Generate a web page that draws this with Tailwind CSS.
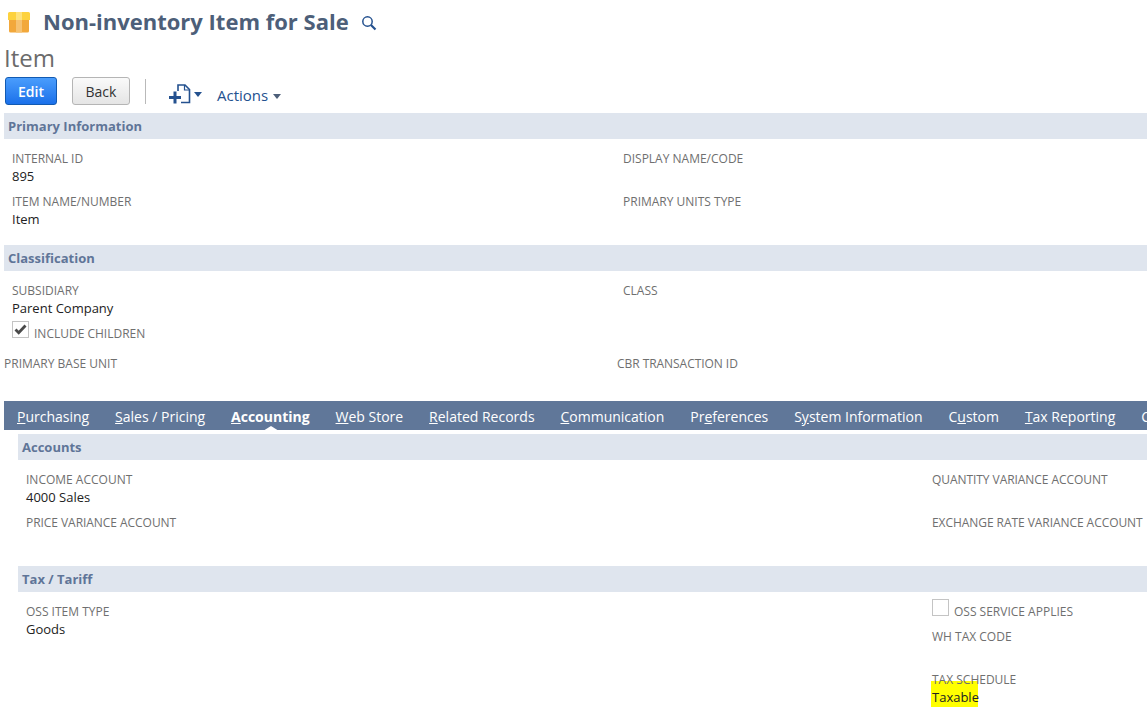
<!DOCTYPE html>
<html lang="en">
<head>
<meta charset="UTF-8">
<title>Non-inventory Item for Sale</title>
<script src="https://cdn.jsdelivr.net/npm/@tailwindcss/browser@4"></script>
</head>
<body class="bg-white overflow-hidden font-['Open_Sans',sans-serif] w-[1147px] h-[714px]">
  <!-- Title -->
  <div class="h-[43px] flex items-center pl-[8px]">
    <svg width="22" height="21" viewBox="0 0 22 21" class="mt-[1px]">
      <path d="M1 6h20v13a1.500 1.500 0 0 1-1.500 1.500h-17A1.500 1.500 0 0 1 1 19z" fill="#f2a83b"/>
      <path d="M0 1.500A1.500 1.500 0 0 1 1.500 0h19A1.500 1.500 0 0 1 22 1.500V8H0z" fill="#fdd23e"/>
      <rect x="8" y="8" width="6" height="12.500" fill="#f6c271"/>
      <rect x="8" y="0" width="6" height="8" fill="#fee27d"/>
    </svg>
    <h1 class="ml-[13px] mt-[-2px] text-[22px] leading-[30px] font-bold text-[#4d5f79]">Non-inventory Item for Sale</h1>
    <svg width="16" height="16" viewBox="0 0 16 16" class="ml-[12px] mt-[3px]" fill="none" stroke="#24518f">
      <circle cx="6.500" cy="6.500" r="4.700" stroke-width="1.500"/>
      <path d="M10 10l4.500 4.500" stroke-width="2.200"/>
    </svg>
  </div>
  <div class="h-[29px] pl-[4px] text-[24px] leading-[29px] text-[#6b6b6b]">Item</div>

  <!-- Toolbar -->
  <div class="h-[41px] flex items-start pt-[5px] pl-[5px]">
    <button class="w-[52px] h-[28px] rounded-[3px] border border-[#125ab2] bg-gradient-to-b from-[#4a9dfc] to-[#1a70ea] text-white text-[14px] font-semibold">Edit</button>
    <button class="ml-[15px] w-[58px] h-[28px] rounded-[3px] border border-[#b5b5b5] bg-gradient-to-b from-[#fafafa] to-[#e5e5e5] text-[#333333] text-[14px] font-medium">Back</button>
    <div class="ml-[15px] mt-[2px] w-px h-[25px] bg-[#b9b9b9]"></div>
    <svg width="22" height="20" viewBox="0 0 22 20" class="ml-[23px] mt-[7px]" fill="none">
      <path d="M9 7V1h7l4.500 4.500V18.500H12" stroke="#24518f" stroke-width="1.600"/>
      <path d="M15.500 1v5h5" stroke="#24518f" stroke-width="1.200"/>
      <path d="M0 13.500h12M6 7.500v12" stroke="#24518f" stroke-width="3"/>
    </svg>
    <span class="ml-[3px] mt-[15px] w-0 h-0 border-x-[4px] border-x-transparent border-t-[5px] border-t-[#24518f]"></span>
    <span class="ml-[15px] mt-[7px] text-[15px] leading-[22px] text-[#24518f]">Actions</span>
    <span class="ml-[5px] mt-[17px] w-0 h-0 border-x-[4px] border-x-transparent border-t-[5px] border-t-[#4d5f79]"></span>
  </div>

  <!-- Primary Information -->
  <div class="ml-[4px] h-[26px] bg-[#dfe5ee] pl-[4px] text-[13px] leading-[26px] font-bold text-[#5f7598]">Primary Information</div>
  <div class="h-[106px] pt-[11px] grid grid-cols-[611px_1fr] pl-[12px] auto-rows-[43px]">
    <div><div class="text-[12px] leading-[18px] text-[#6f6f6f]">INTERNAL ID</div><div class="mt-[-1px] text-[13px] leading-[18px] text-[#222222]">895</div></div>
    <div class="text-[12px] leading-[18px] text-[#6f6f6f]">DISPLAY NAME/CODE</div>
    <div><div class="text-[12px] leading-[18px] text-[#6f6f6f]">ITEM NAME/NUMBER</div><div class="mt-[-1px] text-[13px] leading-[18px] text-[#222222]">Item</div></div>
    <div class="text-[12px] leading-[18px] text-[#6f6f6f]">PRIMARY UNITS TYPE</div>
  </div>

  <!-- Classification -->
  <div class="ml-[4px] h-[26px] bg-[#dfe5ee] pl-[4px] text-[13px] leading-[26px] font-bold text-[#5f7598]">Classification</div>
  <div class="h-[130px] pt-[11px]">
    <div class="grid grid-cols-[611px_1fr] pl-[12px]">
      <div>
        <div class="text-[12px] leading-[18px] text-[#6f6f6f]">SUBSIDIARY</div>
        <div class="mt-[-1px] text-[13px] leading-[18px] text-[#222222]">Parent Company</div>
        <div class="flex items-start h-[25px]">
          <span class="w-[17px] h-[17px] mt-[4px] border border-[#c4c4c4] flex items-center justify-center">
            <svg width="13" height="11" viewBox="0 0 13 11" fill="none"><path d="M1.500 5.500l3.200 3.200L11.500 1.500" stroke="#4a4a4a" stroke-width="2.800"/></svg>
          </span>
          <span class="ml-[5px] mt-[8px] text-[12px] leading-[18px] text-[#6f6f6f]">INCLUDE CHILDREN</span>
        </div>
      </div>
      <div class="text-[12px] leading-[18px] text-[#6f6f6f]">CLASS</div>
    </div>
    <div class="mt-[13px] grid grid-cols-[613px_1fr] pl-[4px]">
      <div class="text-[12px] leading-[18px] text-[#6f6f6f]">PRIMARY BASE UNIT</div>
      <div class="text-[12px] leading-[18px] text-[#6f6f6f] tracking-[-0.05px]">CBR TRANSACTION ID</div>
    </div>
  </div>

  <!-- Tabs -->
  <div class="ml-[4px] h-[29px] bg-[#607799] flex items-center gap-[25.9px] pl-[13px] pt-[2px] text-[14px] leading-[27px] text-white overflow-hidden whitespace-nowrap">
    <span><u>P</u>urchasing</span>
    <span><u>S</u>ales / Pricing</span>
    <span class="relative font-bold"><u>A</u>ccounting<span class="absolute left-[32px] bottom-[-1px] w-0 h-0 border-x-[8px] border-x-transparent border-b-[5px] border-b-white"></span></span>
    <span><u>W</u>eb Store</span>
    <span><u>R</u>elated Records</span>
    <span><u>C</u>ommunication</span>
    <span>Pr<u>e</u>ferences</span>
    <span>S<u>y</u>stem Information</span>
    <span>C<u>u</u>stom</span>
    <span><u>T</u>ax Reporting</span>
    <span>C</span>
  </div>

  <!-- Accounts -->
  <div class="ml-[18px] mt-[4px] h-[26px] bg-[#dfe5ee] pl-[4px] text-[13px] leading-[26px] font-bold text-[#5f7598]">Accounts</div>
  <div class="h-[106px] pt-[11px] grid grid-cols-[906px_1fr] pl-[26px] auto-rows-[43px]">
    <div><div class="text-[12px] leading-[18px] text-[#6f6f6f]">INCOME ACCOUNT</div><div class="mt-[-1px] text-[13px] leading-[18px] text-[#222222]">4000 Sales</div></div>
    <div class="text-[12px] leading-[18px] text-[#6f6f6f] tracking-[-0.06px]">QUANTITY VARIANCE ACCOUNT</div>
    <div class="text-[12px] leading-[18px] text-[#6f6f6f] tracking-[-0.05px]">PRICE VARIANCE ACCOUNT</div>
    <div class="text-[12px] leading-[18px] text-[#6f6f6f] tracking-[-0.06px] whitespace-nowrap">EXCHANGE RATE VARIANCE ACCOUNT</div>
  </div>

  <!-- Tax / Tariff -->
  <div class="ml-[18px] h-[26px] bg-[#dfe5ee] pl-[4px] text-[13px] leading-[26px] font-bold text-[#5f7598]">Tax / Tariff</div>
  <div class="pt-[9px] grid grid-cols-[906px_1fr] pl-[26px]">
    <div class="pt-[2px]"><div class="text-[12px] leading-[18px] text-[#6f6f6f]">OSS ITEM TYPE</div><div class="mt-[-1px] text-[13px] leading-[18px] text-[#222222]">Goods</div></div>
    <div>
      <div class="mt-[-2px] flex items-start h-[29px]">
        <span class="w-[17px] h-[17px] border border-[#c4c4c4]"></span>
        <span class="ml-[5px] mt-[4px] text-[12px] leading-[18px] text-[#6f6f6f]">OSS SERVICE APPLIES</span>
      </div>
      <div class="h-[43px] text-[12px] leading-[18px] text-[#6f6f6f]">WH TAX CODE</div>
      <div class="text-[12px] leading-[18px] text-[#6f6f6f]">TAX SCHEDULE</div>
      <div class="mt-[-8px] ml-[-1px] w-[47px] h-[26px] bg-[#ffff00] pt-[7px] pl-[1px] text-[13px] leading-[18px] text-[#222222]">Taxable</div>
    </div>
  </div>
</body>
</html>
